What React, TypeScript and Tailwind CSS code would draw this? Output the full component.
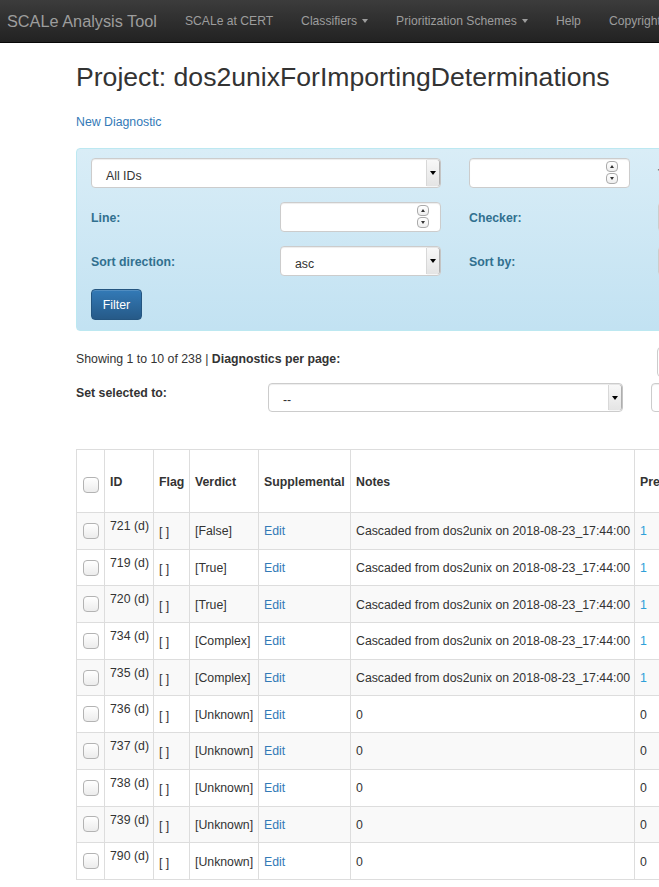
import React from "react";

function Arrow() {
  return (
    <div className="absolute top-[1px] bottom-[1px] right-[1px] w-[13px] bg-linear-to-b from-[#f8f8f8] to-[#e4e4e4] border-l border-[#d8d8d8] rounded-r-[3px] shadow-[1px_0_1px_rgba(0,0,0,0.35)] flex items-center justify-center">
      <div className="w-0 h-0 border-x-[3px] border-x-transparent border-t-[4px] border-t-black" />
    </div>
  );
}

function Select({ className, text }: { className: string; text: string }) {
  return (
    <div className={`relative flex items-center bg-white border border-[#ccc] rounded-[4px] shadow-[inset_0_1px_1px_rgba(0,0,0,0.075)] ${className}`}>
      <span className="pl-[14px] pt-[6px] text-[#333]">{text}</span>
      <Arrow />
    </div>
  );
}

function Spin() {
  return (
    <div className="absolute right-[11px] top-[2px] flex flex-col gap-[1px]">
      <div className="w-[12px] h-[11px] border border-[#aaa] rounded-[4px] bg-linear-to-b from-white to-[#eee] flex items-center justify-center">
        <div className="w-0 h-0 border-x-[2px] border-x-transparent border-b-[3px] border-b-[#333]" />
      </div>
      <div className="w-[12px] h-[11px] border border-[#aaa] rounded-[4px] bg-linear-to-b from-white to-[#eee] flex items-center justify-center">
        <div className="w-0 h-0 border-x-[2px] border-x-transparent border-t-[3px] border-t-[#333]" />
      </div>
    </div>
  );
}

function NumInput({ className }: { className: string }) {
  return (
    <div className={`relative bg-white border border-[#ccc] rounded-[4px] shadow-[inset_0_1px_1px_rgba(0,0,0,0.075)] ${className}`}>
      <Spin />
    </div>
  );
}

function Check({ className = "" }: { className?: string }) {
  return (
    <div className={`w-[16px] h-[16px] border border-[#b3b3b3] rounded-[4px] bg-linear-to-b from-white to-[#ececec] ${className}`} />
  );
}

function Caret() {
  return <span className="inline-block w-0 h-0 ml-[5px] align-middle border-x-[3.5px] border-x-transparent border-t-[4px] border-t-[#9d9d9d]" />;
}

const cascaded = "Cascaded from dos2unix on 2018-08-23_17:44:00";

const rows: [string, string, string, string][] = [
  ["721", "[False]", cascaded, "1"],
  ["719", "[True]", cascaded, "1"],
  ["720", "[True]", cascaded, "1"],
  ["734", "[Complex]", cascaded, "1"],
  ["735", "[Complex]", cascaded, "1"],
  ["736", "[Unknown]", "0", "0"],
  ["737", "[Unknown]", "0", "0"],
  ["738", "[Unknown]", "0", "0"],
  ["739", "[Unknown]", "0", "0"],
  ["790", "[Unknown]", "0", "0"],
];

const cell = "border-r border-b border-[#ddd] px-[5px] whitespace-nowrap";
const label = "flex items-center pt-[3px] font-bold text-[#31708f]";

export default function App() {
  return (
    <div className="w-full h-[887px] overflow-hidden bg-white text-[12.3px] leading-[17px] text-[#333] font-['Liberation_Sans',Arial,sans-serif]">
      {/* Navbar */}
      <div className="h-[43px] w-[900px] flex items-center whitespace-nowrap bg-linear-to-b from-[#3c3c3c] to-[#222] border-b border-[#080808] text-[#9d9d9d] text-[12.15px]">
        <span className="pl-[7px] pr-[14px] text-[16.3px] shrink-0">SCALe Analysis Tool</span>
        <span className="px-[14px] shrink-0">SCALe at CERT</span>
        <span className="px-[14px] shrink-0">Classifiers<Caret /></span>
        <span className="px-[14px] shrink-0">Prioritization Schemes<Caret /></span>
        <span className="px-[14px] shrink-0">Help</span>
        <span className="px-[14px] shrink-0">Copyright</span>
      </div>

      <div className="pl-[76px]">
        <h1 className="mt-[20px] text-[26.6px] leading-[29px] text-[#333] whitespace-nowrap">Project: dos2unixForImportingDeterminations</h1>
        <div className="mt-[22px] text-[#337ab7]">New Diagnostic</div>

        {/* Filter panel */}
        <div className="mt-[17px] w-[820px] rounded-[4px] border border-[#bce8f1] bg-linear-to-b from-[#d9edf7] to-[#c2e2f2] pl-[14px] pt-[9px] pb-[10px]">
          <div className="grid grid-cols-[161px_161px_161px_161px] gap-x-[28px] gap-y-[14px] auto-rows-[30px]">
            <Select className="col-span-2 h-[30px]" text="All IDs" />
            <NumInput className="h-[30px]" />
            <div className={label}>Tool:</div>

            <div className={label}>Line:</div>
            <NumInput className="h-[30px]" />
            <div className={label}>Checker:</div>
            <Select className="h-[30px]" text="" />

            <div className={label}>Sort direction:</div>
            <Select className="h-[30px]" text="asc" />
            <div className={label}>Sort by:</div>
            <Select className="h-[30px]" text="" />
          </div>
          <button className="mt-[13px] w-[51px] h-[31px] pt-[1px] rounded-[4px] border border-[#245580] bg-linear-to-b from-[#337ab7] to-[#265a88] text-white shadow-[inset_0_1px_0_rgba(255,255,255,0.15)]">
            Filter
          </button>
        </div>

        {/* Showing row */}
        <div className="mt-[16px] flex items-start">
          <div className="w-[581px] shrink-0 pt-[4px] whitespace-nowrap">
            Showing 1 to 10 of 238 | <span className="font-bold">Diagnostics per page:</span>
          </div>
          <Select className="w-[200px] h-[30px] shrink-0" text="10" />
        </div>

        <div className="mt-[6px] flex items-start">
          <div className="w-[192px] shrink-0 pt-[2px] font-bold">Set selected to:</div>
          <Select className="w-[355px] h-[29px] shrink-0" text="--" />
          <Select className="ml-[28px] w-[200px] h-[29px] shrink-0" text="--" />
        </div>

        {/* Table */}
        <div className="mt-[37px] w-max border-l border-t border-[#ddd] grid grid-cols-[28px_49px_36px_69px_92px_284px_90px_90px_90px]">
          <div className={`${cell} h-[63px] flex items-center justify-center`}>
            <Check className="mt-[8px]" />
          </div>
          <div className={`${cell} h-[63px] flex items-center pt-[2px] font-bold`}>ID</div>
          <div className={`${cell} h-[63px] flex items-center pt-[2px] font-bold`}>Flag</div>
          <div className={`${cell} h-[63px] flex items-center pt-[2px] font-bold`}>Verdict</div>
          <div className={`${cell} h-[63px] flex items-center pt-[2px] font-bold`}>Supplemental</div>
          <div className={`${cell} h-[63px] flex items-center pt-[2px] font-bold`}>Notes</div>
          <div className={`${cell} h-[63px] flex items-center pt-[2px] font-bold`}>Predicted</div>
          <div className={`${cell} h-[63px] flex items-center pt-[2px] font-bold`}>Confidence</div>
          <div className={`${cell} h-[63px] flex items-center pt-[2px] font-bold`}>Priority</div>

          {rows.map(([id, verdict, notes, pre], i) => {
            const bg = i % 2 === 0 ? "bg-[#f9f9f9]" : "bg-white";
            return (
              <React.Fragment key={id}>
                <div className={`${cell} ${bg} h-[36.7px] flex items-center justify-center`}>
                  <Check />
                </div>
                <div className={`${cell} ${bg} h-[36.7px] pt-[5px]`}>{id} (d)</div>
                <div className={`${cell} ${bg} h-[36.7px] flex items-center pt-[4px]`}>[ ]</div>
                <div className={`${cell} ${bg} h-[36.7px] flex items-center pt-[2px]`}>{verdict}</div>
                <div className={`${cell} ${bg} h-[36.7px] flex items-center pt-[2px] text-[#337ab7]`}>Edit</div>
                <div className={`${cell} ${bg} h-[36.7px] flex items-center pt-[2px]`}>{notes}</div>
                <div className={`${cell} ${bg} h-[36.7px] flex items-center pt-[2px] ${pre === "1" ? "text-[#2f9fd8]" : ""}`}>{pre}</div>
                <div className={`${cell} ${bg} h-[36.7px] flex items-center`}></div>
                <div className={`${cell} ${bg} h-[36.7px] flex items-center`}></div>
              </React.Fragment>
            );
          })}
        </div>
      </div>
    </div>
  );
}
